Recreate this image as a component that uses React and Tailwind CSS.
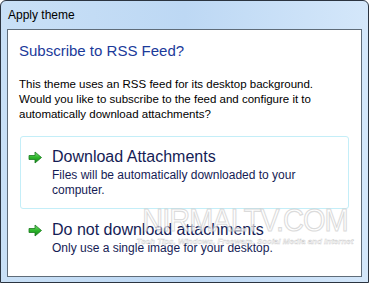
import React from "react";

const font = { fontFamily: '"Segoe UI", "Liberation Sans", Arial, sans-serif' };

const GreenArrow = () => (
  <svg width="15" height="13" viewBox="0 0 15 13" className="shrink-0">
    <defs>
      <linearGradient id="ga" x1="0" y1="0" x2="0" y2="1">
        <stop offset="0" stopColor="#7de07a" />
        <stop offset="0.5" stopColor="#2db52a" />
        <stop offset="1" stopColor="#12861a" />
      </linearGradient>
    </defs>
    <path
      d="M1 4.5 H7 V1 L13.5 6.5 L7 12 V8.5 H1 Z"
      fill="url(#ga)"
      stroke="#1a7a1f"
      strokeWidth="0.8"
      strokeLinejoin="round"
    />
  </svg>
);

const CommandLink = ({ title, text, hovered }) => (
  <div
    className={`flex items-start gap-[9px] rounded-[3px] border pl-[7px] pr-3 ${
      hovered ? "border-[#c4eef8] bg-white" : "border-transparent"
    }`}
  >
    <div className="pt-[14px]">
      <GreenArrow />
    </div>
    <div className="pt-[10px] pb-[10px]">
      <div className="text-[16px] leading-[20px] text-[#151c55]">{title}</div>
      <div className="mt-[1px] text-[12px] leading-[15px] text-[#151c55]">{text}</div>
    </div>
  </div>
);

export default function App() {
  return (
    <div
      className="relative flex h-[283px] w-[369px] flex-col overflow-hidden rounded-t-[6px] border border-[#2b3440] bg-gradient-to-r from-[#c9e0f6] via-[#bdd8f4] to-[#d4e7fa]"
      style={font}
    >
      <div className="flex h-[28px] shrink-0 items-center pl-[7px] text-[12px] text-black">
        Apply theme
      </div>
      <div className="mx-[6px] mb-[5px] flex flex-1 flex-col border border-[#5f6c79] bg-white pl-[11px] pr-[12px]">
        <div className="mt-[10px] text-[15px] leading-[22px] text-[#1b3a9a]">
          Subscribe to RSS Feed?
        </div>
        <div className="mt-[15px] text-[11.5px] leading-[15px] text-black">
          This theme uses an RSS feed for its desktop background.
          <br />
          Would you like to subscribe to the feed and configure it to
          <br />
          automatically download attachments?
        </div>
        <div className="mt-[14px] ml-[1px] flex flex-col">
          <CommandLink
            hovered
            title="Download Attachments"
            text={
              <>
                Files will be automatically downloaded to your
                <br />
                computer.
              </>
            }
          />
          <CommandLink
            title="Do not download attachments"
            text="Only use a single image for your desktop."
          />
        </div>
      </div>

      <div className="pointer-events-none absolute left-[132px] top-[205px] flex w-[224px] flex-col items-center opacity-75">
        <div className="origin-bottom scale-y-110 text-[29px] leading-[30px] tracking-[-1px] text-white [-webkit-text-stroke:1px_#cfcfcf]">
          NIRMALTV.COM
        </div>
        <div className="mt-[1px] text-[8px] font-bold italic leading-[10px] text-white [-webkit-text-stroke:0.4px_#bdbdbd]">
          Tech Tips, Windows, Freeware, Social Media and Internet
        </div>
      </div>
    </div>
  );
}
